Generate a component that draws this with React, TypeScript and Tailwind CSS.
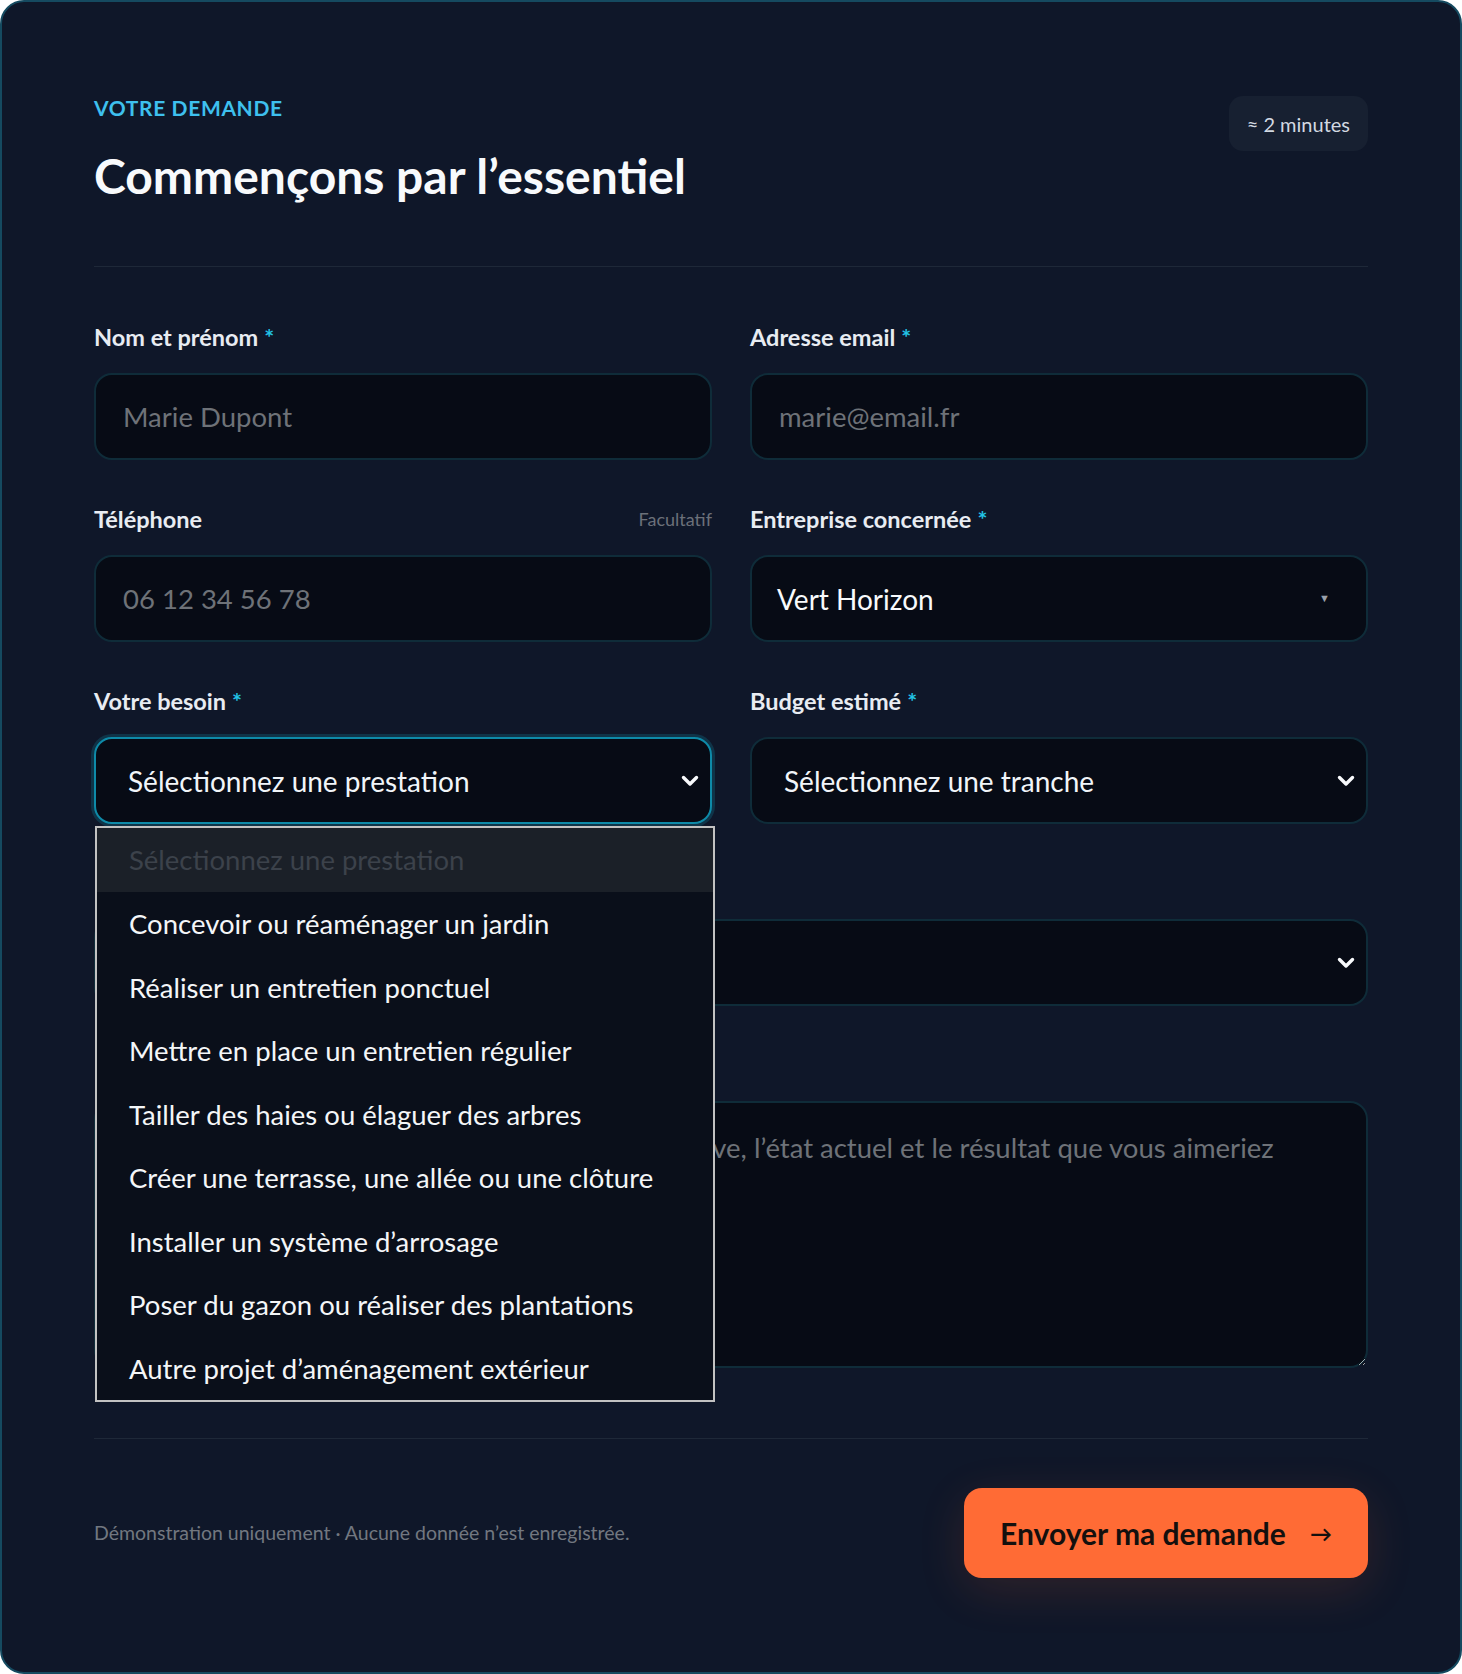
import React from 'react';

const services = [
  'Concevoir ou réaménager un jardin',
  'Réaliser un entretien ponctuel',
  'Mettre en place un entretien régulier',
  'Tailler des haies ou élaguer des arbres',
  'Créer une terrasse, une allée ou une clôture',
  'Installer un système d’arrosage',
  'Poser du gazon ou réaliser des plantations',
  'Autre projet d’aménagement extérieur',
];

const Chevron = () => (
  <svg width="20" height="13" viewBox="0 0 20 13" fill="none" className="shrink-0">
    <path d="M3.5 3.5l6.5 6.5 6.5-6.5" stroke="#f8fafc" strokeWidth="3.4" strokeLinecap="round" strokeLinejoin="round" />
  </svg>
);

const Label = ({ text, required, hint }: { text: string; required?: boolean; hint?: string }) => (
  <div className="flex h-[30px] items-center justify-between">
    <span className="text-[23.5px] font-bold leading-[30px] text-[#e8ecf2]">
      {text}
      {required && <span className="ml-[6px] text-[#22c3e6]">*</span>}
    </span>
    {hint && <span className="text-[18px] text-[#6b7079]">{hint}</span>}
  </div>
);

const inputBase =
  'h-[87px] w-full rounded-[18px] border-2 border-[#0f2c39] bg-[#070b15] px-[27px] text-[27.5px] text-[#f1f5f9] outline-none placeholder:text-[#6e7278]';

const FakeSelect = ({ value, focused }: { value: string; focused?: boolean }) => (
  <div
    className={
      focused
        ? 'flex h-[87px] w-full items-center justify-between rounded-[18px] border-2 border-[#0e8aa8] bg-[#070b15] pl-[32px] pr-[10px] shadow-[0_0_0_3px_rgba(14,138,168,0.25)]'
        : 'flex h-[87px] w-full items-center justify-between rounded-[18px] border-2 border-[#0f2c39] bg-[#070b15] pl-[32px] pr-[10px]'
    }
  >
    <span className="text-[28px] text-[#f1f5f9]">{value}</span>
    <Chevron />
  </div>
);

export default function App() {
  return (
    <div className="min-h-screen bg-white font-['Lato','Noto_Sans',sans-serif]">
      <div className="rounded-[24px] border-2 border-[#154a60] bg-[#0f1729] px-[92px] pt-[92px] pb-[94px]">
        {/* header */}
        <div className="flex items-start justify-between">
          <div>
            <p className="text-[21px] font-bold leading-[28px] tracking-[0.03em] text-[#3ec0ee]">VOTRE DEMANDE</p>
            <h1 className="mt-[25px] text-[48px] font-bold leading-[58px] text-[#f8fafc]">Commençons par l’essentiel</h1>
          </div>
          <div className="mt-[2px] flex h-[55px] items-center rounded-[14px] bg-[#172031] px-[18px] text-[20px] text-[#d3d9e2]">
            ≈ 2 minutes
          </div>
        </div>

        <div className="mt-[61px] h-px bg-[#1e2838]" />

        {/* form */}
        <div className="mt-[55px] grid grid-cols-2 gap-x-[38px] gap-y-[44px]">
          <div>
            <Label text="Nom et prénom" required />
            <input className={`mt-[21px] ${inputBase}`} placeholder="Marie Dupont" />
          </div>
          <div>
            <Label text="Adresse email" required />
            <input className={`mt-[21px] ${inputBase}`} placeholder="marie@email.fr" />
          </div>

          <div>
            <Label text="Téléphone" hint="Facultatif" />
            <input className={`mt-[21px] ${inputBase}`} placeholder="06 12 34 56 78" />
          </div>
          <div>
            <Label text="Entreprise concernée" required />
            <div className="mt-[21px] flex h-[87px] w-full items-center justify-between rounded-[18px] border-2 border-[#0f2c39] bg-[#070b15] pl-[25px] pr-[36px]">
              <span className="text-[28px] text-[#f8fafc]">Vert Horizon</span>
              <span className="text-[11px] text-[#9aa1ab]">▼</span>
            </div>
          </div>

          <div className="relative">
            <Label text="Votre besoin" required />
            <div className="mt-[21px]">
              <FakeSelect value="Sélectionnez une prestation" focused />
            </div>
            {/* open option list */}
            <ul className="absolute left-[1px] top-full z-10 mt-[2px] w-[620px] border-2 border-[#c2c2c2] bg-[#0a0f1a]">
              <li className="flex h-[64px] items-center bg-[#1b2028] pl-[32px] text-[27.5px] text-[#3c424b]">
                Sélectionnez une prestation
              </li>
              {services.map((s) => (
                <li key={s} className="flex h-[63.5px] items-center pl-[32px] text-[27.5px] text-[#f4f6f8]">
                  {s}
                </li>
              ))}
            </ul>
          </div>
          <div>
            <Label text="Budget estimé" required />
            <div className="mt-[21px]">
              <FakeSelect value="Sélectionnez une tranche" />
            </div>
          </div>

          <div className="col-span-2">
            <Label text="Délai souhaité" required />
            <div className="mt-[21px]">
              <FakeSelect value="Sélectionnez un délai" />
            </div>
          </div>

          <div className="col-span-2">
            <Label text="Décrivez votre projet" required />
            <textarea
              className="mt-[21px] block h-[267px] w-full resize-y rounded-[18px] border-2 border-[#0f2c39] bg-[#070b15] px-[27px] pt-[25px] text-[27.5px] leading-[40px] text-[#f1f5f9] outline-none placeholder:text-[#6e7278]"
              placeholder="Présentez votre terrain : la superficie approximative, l’état actuel et le résultat que vous aimeriez obtenir."
            />
          </div>
        </div>

        <div className="mt-[70px] h-px bg-[#1e2838]" />

        {/* footer */}
        <div className="mt-[49px] flex items-center justify-between">
          <p className="text-[19.5px] text-[#727780]">Démonstration uniquement · Aucune donnée n’est enregistrée.</p>
          <button className="flex h-[90px] w-[404px] items-center justify-center gap-[24px] rounded-[18px] bg-[#ff6b35] text-[30px] font-bold text-[#14100e] shadow-[0_12px_48px_rgba(255,107,53,0.14)]">
            <span>Envoyer ma demande</span>
            <span className="text-[22px]">→</span>
          </button>
        </div>
      </div>
    </div>
  );
}
